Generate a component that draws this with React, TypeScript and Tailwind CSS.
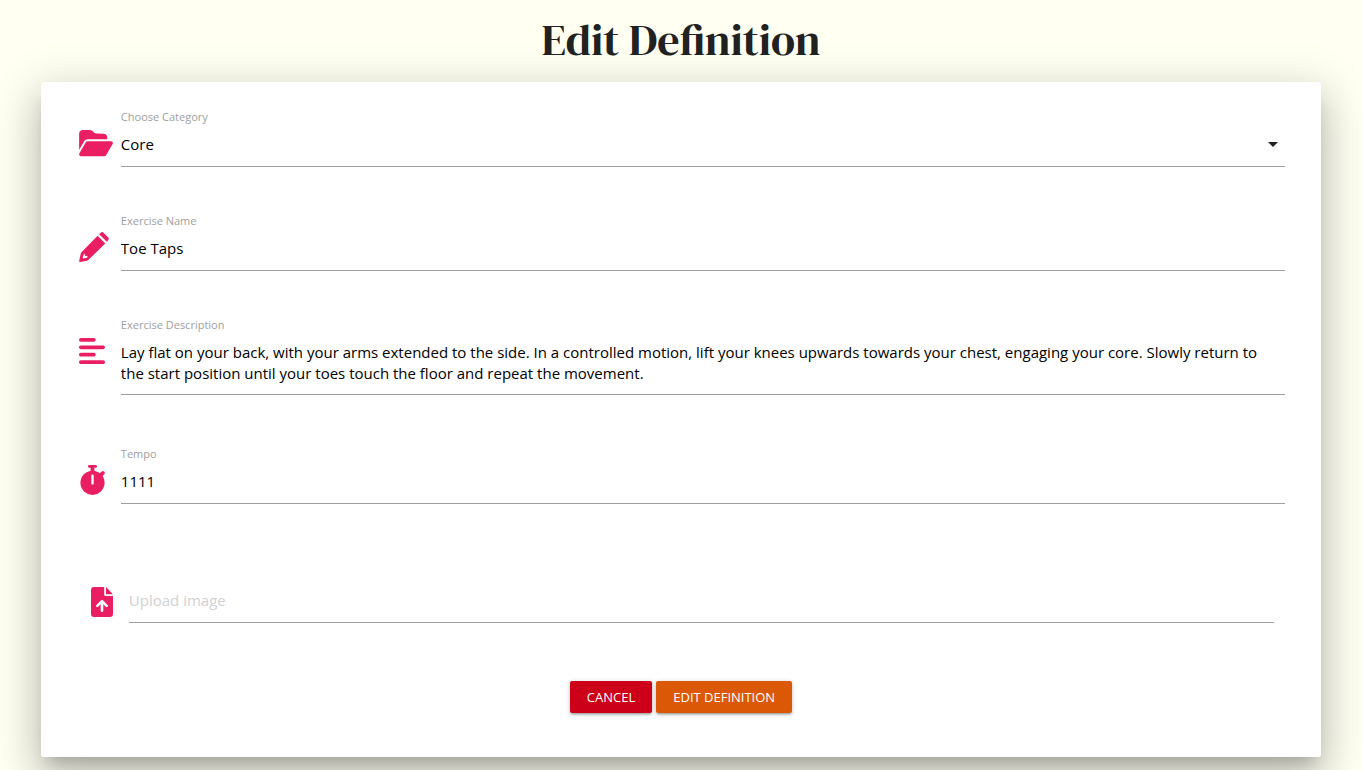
import { useRef, useState } from 'react';
import type { ReactNode } from 'react';
import { FaAlignLeft, FaFolderOpen } from 'react-icons/fa6';

const control =
  'block w-full rounded-none border-b border-[#9e9e9e] bg-transparent text-[15px] text-black outline-none focus:border-[#e91e63]';

function PencilIcon() {
  return (
    <svg viewBox="0 0 30 30" className="h-[30px] w-[30px] fill-current" aria-hidden="true">
      <path d="M18.6 3.7L26.3 11.4L9.3 28Q8.7 28.6 8 28.7L1.3 29.9Q0 30.1 .2 28.7L1.7 21.8Q1.9 20.9 2.5 20.2Z" />
      <path d="M20.2 2.2L21.5.9Q23.1-.7 24.7.9L29 5.2Q30.6 6.8 29 8.4L27.8 9.8Z" />
      <path d="M5.1 21.2L6.2 23.8L9 24.6L7.9 25.8L4.1 26.5L3.7 25.4Z" className="fill-white" />
    </svg>
  );
}

function StopwatchIcon() {
  return (
    <svg viewBox="0 0 26 30" className="h-[30px] w-[26px] fill-current" aria-hidden="true">
      <circle cx="13.5" cy="17.8" r="12.1" />
      <rect x="9" y="0" width="9" height="2.8" rx="1.4" />
      <rect x="11.6" y="1" width="3.8" height="6" />
      <path d="M20.5 8.6L22.4 6.7A1.7 1.7 0 0 1 25.2 9.3L23.4 11.3Z" />
      <rect x="12.3" y="9.6" width="2.4" height="10" rx="1.2" className="fill-white" />
    </svg>
  );
}

function FileUploadIcon() {
  return (
    <svg viewBox="0 0 22 30" className="h-[30px] w-[22px] fill-current" aria-hidden="true">
      <path d="M3 0H13.2V7.5A1.6 1.6 0 0 0 14.8 9.1H22V27A3 3 0 0 1 19 30H3A3 3 0 0 1 0 27V3A3 3 0 0 1 3 0Z" />
      <path d="M15 0L22 7.2H15Z" />
      <path
        d="M11 23.8V14.6M6.3 18.8L11 14.1L15.7 18.8"
        className="fill-none stroke-white stroke-[2.6]"
        strokeLinecap="round"
        strokeLinejoin="round"
      />
    </svg>
  );
}

function Field({ id, label, icon, children }: { id: string; label: string; icon: ReactNode; children: ReactNode }) {
  return (
    <div className="flex">
      <span className="w-[42px] shrink-0 pt-[19px] text-[#e91e63]">{icon}</span>
      <div className="min-w-0 flex-1">
        <label htmlFor={id} className="block text-[11px] leading-4 text-[#9e9e9e]">
          {label}
        </label>
        {children}
      </div>
    </div>
  );
}

export default function App() {
  const [fileName, setFileName] = useState('');
  const fileInput = useRef<HTMLInputElement>(null);

  return (
    <div className="min-h-screen overflow-hidden bg-[#fffff2] pb-3 font-['Open_Sans',sans-serif]">
      <h1 className="pt-3 pb-3.5 text-center font-['DM_Serif_Display','Liberation_Serif',serif] text-[44px] leading-[56px] font-normal text-[#212121]">
        Edit Definition
      </h1>
      <form
        onSubmit={(e) => e.preventDefault()}
        className="mx-auto w-[94%] rounded-xs bg-white px-9 pt-[27px] pb-11 shadow-[0_24px_38px_3px_rgba(0,0,0,0.14),0_9px_46px_8px_rgba(0,0,0,0.12),0_11px_15px_-7px_rgba(0,0,0,0.2)]"
      >
        <div className="flex flex-col gap-[46px] pl-[2px]">
          <Field id="category" label="Choose Category" icon={<FaFolderOpen className="h-[30px] w-[34px]" />}>
            <div className="relative">
              <select id="category" defaultValue="Core" className={`${control} h-[42px] appearance-none pb-0.5`}>
                <option>Core</option>
              </select>
              <svg
                viewBox="0 0 24 24"
                className="pointer-events-none absolute top-[7px] right-0 size-6 fill-[#212121]"
                aria-hidden="true"
              >
                <path d="M7 10l5 5 5-5z" />
              </svg>
            </div>
          </Field>
          <Field id="name" label="Exercise Name" icon={<PencilIcon />}>
            <input id="name" type="text" defaultValue="Toe Taps" className={`${control} h-[42px] pb-1`} />
          </Field>
          <Field id="description" label="Exercise Description" icon={<FaAlignLeft className="h-[30px] w-[26px]" />}>
            <textarea
              id="description"
              rows={2}
              className={`${control} resize-none overflow-hidden pt-[9px] pr-3 pb-[10px] leading-[21px]`}
              defaultValue="Lay flat on your back, with your arms extended to the side. In a controlled motion, lift your knees upwards towards your chest, engaging your core. Slowly return to the start position until your toes touch the floor and repeat the movement."
            />
          </Field>
          <div className="pt-[5px]">
            <Field id="tempo" label="Tempo" icon={<StopwatchIcon />}>
              <input id="tempo" type="text" defaultValue="1111" className={`${control} h-[42px] pb-1`} />
            </Field>
          </div>
        </div>

        <div className="mt-[77px] flex pr-[11px] pl-[14px]">
          <label htmlFor="image" className="w-[38px] shrink-0 cursor-pointer pt-[6px] text-[#e91e63]">
            <FileUploadIcon />
          </label>
          <input
            id="image"
            ref={fileInput}
            type="file"
            accept="image/*"
            aria-label="Image file"
            className="hidden"
            onChange={(e) => setFileName(e.target.files?.[0]?.name ?? '')}
          />
          <input
            type="text"
            readOnly
            value={fileName}
            placeholder="Upload image"
            aria-label="Upload image"
            onClick={() => fileInput.current?.click()}
            className={`${control} h-[42px] min-w-0 pb-1 placeholder:text-[#d1d1d1]`}
          />
        </div>

        <div className="mt-[58px] flex justify-center gap-1 text-[13px] leading-8 text-white">
          <button
            type="button"
            className="h-8 rounded-xs bg-[#cc0018] px-[17px] uppercase shadow-[0_2px_2px_0_rgba(0,0,0,0.14),0_3px_1px_-2px_rgba(0,0,0,0.12),0_1px_5px_0_rgba(0,0,0,0.2)]"
          >
            Cancel
          </button>
          <button
            type="submit"
            className="h-8 rounded-xs bg-[#db5807] px-[17px] uppercase shadow-[0_2px_2px_0_rgba(0,0,0,0.14),0_3px_1px_-2px_rgba(0,0,0,0.12),0_1px_5px_0_rgba(0,0,0,0.2)]"
          >
            Edit Definition
          </button>
        </div>
      </form>
    </div>
  );
}
